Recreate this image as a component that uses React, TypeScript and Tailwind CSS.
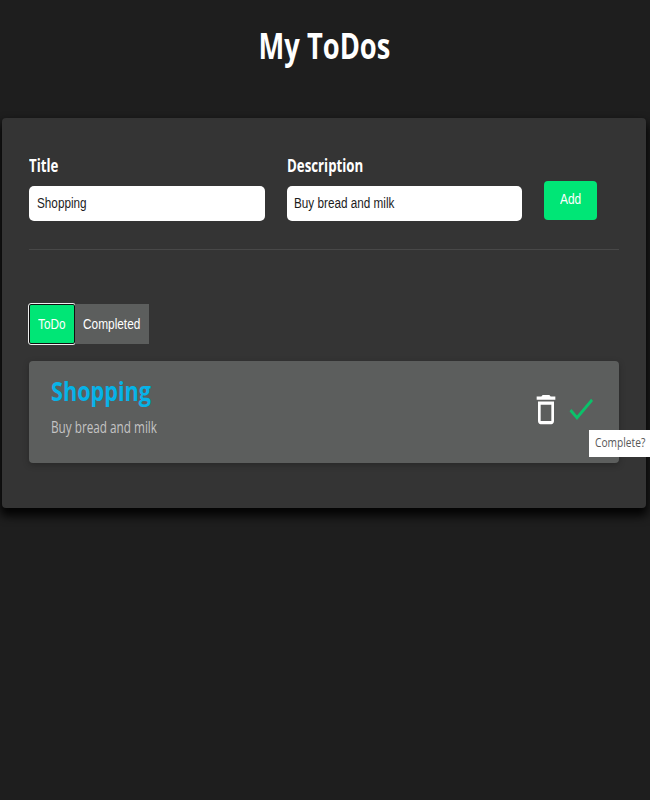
import type { ReactNode } from 'react';

const UI = "font-['Open_Sans','Noto_Sans',sans-serif]";
const FORM = "font-['Liberation_Sans',Arial,sans-serif]";

function Label({ className, children }: { className: string; children: ReactNode }) {
  return <span className={`inline-block origin-left whitespace-nowrap ${className}`}>{children}</span>;
}

function Field({ label, value, size }: { label: string; value: string; size: string }) {
  return (
    <div className={size}>
      <div className={`${UI} -mt-[3px] h-[33px] text-[17px] leading-[25px] font-bold text-white`}>
        <Label className="scale-x-[0.78]">{label}</Label>
      </div>
      <div className={`${FORM} h-[35px] rounded-[5px] bg-white text-[15.5px] leading-[33px] text-[#1c1c1c]`}>
        <Label className="scale-x-[0.757]">{value}</Label>
      </div>
    </div>
  );
}

export default function App() {
  return (
    <div className="h-[800px] w-[650px] overflow-hidden bg-[#1e1e1e]">
      <h1 className={`${UI} flex h-[118px] justify-center pt-[22px] pr-[2px] text-[35px] leading-[48px] font-bold text-white`}>
        <span className="inline-block h-[48px] origin-center scale-x-[0.78] whitespace-nowrap">My ToDos</span>
      </h1>

      <main className="ml-[2px] h-[390px] w-[644px] rounded-[4px] bg-[#343434] px-[27px] pt-[38px] shadow-[0_6px_10px_2px_rgba(0,0,0,0.9)]">
        <section className="flex h-[94px] border-b border-[#484848]">
          <Field label="Title" value="Shopping" size="w-[236px] [&>div:last-child]:pl-[8px]" />
          <div className="w-[22px]" />
          <Field label="Description" value="Buy bread and milk" size="w-[235px] [&>div:last-child]:pl-[7px]" />
          <button className={`${FORM} mt-[25px] ml-[22px] h-[39px] w-[53px] rounded-[4px] bg-[#00e676] pb-[3px] pl-[16px] text-left text-[15.5px] leading-[36px] text-white`}>
            <Label className="scale-x-[0.77]">Add</Label>
          </button>
        </section>

        <nav className={`${FORM} mt-[54px] flex h-[40px] text-[15.5px] leading-[40px] text-white`}>
          <button className="h-[40px] w-[46px] rounded-[2px] border border-[#101010] bg-[#00e676] pl-[8px] text-left leading-[38px] outline outline-[#eeeeee]">
            <Label className="scale-x-[0.76]">ToDo</Label>
          </button>
          <button className="h-[40px] w-[74px] bg-[#5c5e5d] pl-[8px] text-left">
            <Label className="scale-x-[0.765]">Completed</Label>
          </button>
        </nav>

        <article className="relative mt-[17px] flex h-[102px] w-[590px] rounded-[4px] bg-[#5c5e5d] pt-[10px] pl-[22px] shadow-[0_2px_6px_rgba(0,0,0,0.25)]">
          <div className={`${UI} w-[479px]`}>
            <h2 className="h-[44px] text-[27px] leading-[39px] font-bold text-[#06b3e8]">
              <Label className="scale-x-[0.802]">Shopping</Label>
            </h2>
            <p className="text-[16px] leading-[25px] text-[#c4c4c4]">
              <Label className="scale-x-[0.734]">Buy bread and milk</Label>
            </p>
          </div>
          <div className="mt-[19px] flex gap-[3px]">
            <svg className="h-[39px] w-[32px]" viewBox="0 0 24 24" preserveAspectRatio="none" fill="#ffffff">
              <path d="M6 19c0 1.1.9 2 2 2h8c1.1 0 2-.9 2-2V7H6v12zM8 9h8v10H8V9zm7.5-5l-1-1h-5l-1 1H5v2h14V4h-3.5z" />
            </svg>
            <svg className="h-[38px] w-[32px]" viewBox="0 0 24 24" preserveAspectRatio="none" fill="#0ac26a">
              <path d="M9 16.17L4.83 12l-1.42 1.41L9 19 21 7l-1.41-1.41z" />
            </svg>
          </div>
          <div className={`${UI} absolute top-[69px] left-[560px] h-[27px] w-[61px] bg-white pl-[6px] text-[13.5px] leading-[25px] text-[#575757]`}>
            <Label className="scale-x-[0.755]">Complete?</Label>
          </div>
        </article>
      </main>
    </div>
  );
}
